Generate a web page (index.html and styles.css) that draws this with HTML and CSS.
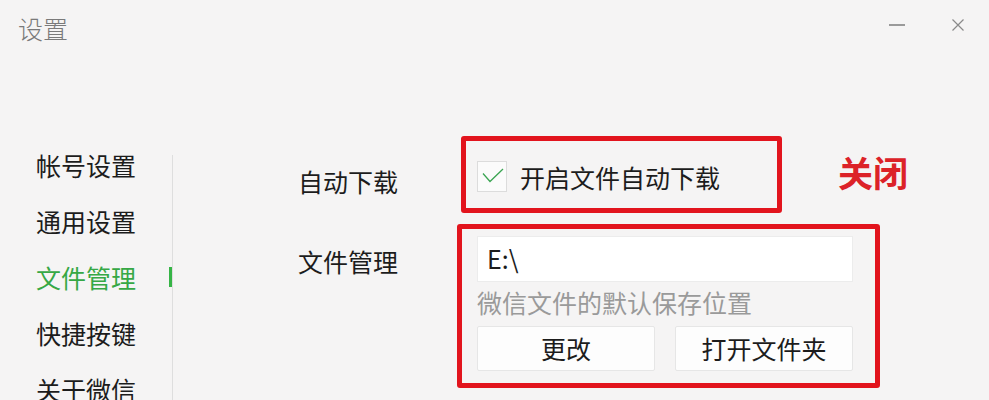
FILE: index.html
```html
<!DOCTYPE html>
<html lang="zh-CN">
<head>
<meta charset="utf-8">
<title>设置</title>
<link rel="stylesheet" href="styles.css">
</head>
<body>
<div class="window">
  <header class="titlebar">
    <div class="title">设置</div>
    <div class="controls">
      <svg class="ctl-min" width="16" height="14" viewBox="0 0 16 14"><line x1="0" y1="7" x2="16" y2="7" stroke="#9a9a9a" stroke-width="2"/></svg>
      <svg class="ctl-close" width="14" height="14" viewBox="0 0 14 14"><path d="M1.5 1.5 L12.5 12.5 M12.5 1.5 L1.5 12.5" stroke="#8a8a8a" stroke-width="1.2" fill="none"/></svg>
    </div>
  </header>
  <main class="main">
    <nav class="sidebar">
      <div class="nav-item">帐号设置</div>
      <div class="nav-item">通用设置</div>
      <div class="nav-item active">文件管理</div>
      <div class="nav-item">快捷按键</div>
      <div class="nav-item">关于微信</div>
    </nav>
    <section class="content">
      <div class="row row-download">
        <div class="label label-download">自动下载</div>
        <div class="mark-box box-download">
          <span class="checkbox">
            <svg width="30" height="31" viewBox="0 0 30 31"><path d="M6 12.5 L13 20.5 L26 8" stroke="#3aa552" stroke-width="1.3" fill="none"/></svg>
          </span>
          <span class="check-text">开启文件自动下载</span>
        </div>
        <div class="annot">关闭</div>
      </div>
      <div class="row row-files">
        <div class="label label-files">文件管理</div>
        <div class="mark-box box-files">
          <div class="path-input">E:\</div>
          <div class="hint">微信文件的默认保存位置</div>
          <div class="buttons">
            <div class="btn">更改</div>
            <div class="btn">打开文件夹</div>
          </div>
        </div>
      </div>
    </section>
  </main>
</div>
</body>
</html>
```
FILE: styles.css
```css
* { box-sizing: border-box; }
html, body {
  margin: 0;
  padding: 0;
  background: #f5f4f4;
  font-family: "Noto Sans CJK SC", "Noto Sans", sans-serif;
  color: #1c1c1c;
}
.window {
  width: 989px;
  height: 400px;
  overflow: hidden;
  background: #f5f4f4;
}
.titlebar {
  height: 136px;
  display: flex;
  justify-content: space-between;
  align-items: flex-start;
  padding: 16px 24px 0 18px;
}
.title {
  font-size: 25px;
  line-height: 25px;
  color: #7a7a7a;
  font-weight: 300;
}
.controls {
  display: flex;
  align-items: center;
  gap: 46px;
  padding-top: 2px;
}
.ctl-min, .ctl-close { display: block; }
.main {
  display: flex;
  align-items: flex-start;
}
.sidebar {
  width: 173px;
  margin-top: 19px;
  padding-left: 36px;
  border-right: 1px solid #dedede;
  display: flex;
  flex-direction: column;
  gap: 35px;
  height: 260px;
}
.nav-item {
  position: relative;
  font-size: 25px;
  line-height: 21px;
  white-space: nowrap;
}
.nav-item.active { color: #36a845; }
.nav-item.active::after {
  content: "";
  position: absolute;
  right: 0;
  top: 0;
  width: 3px;
  height: 20px;
  background: #36b446;
}
.content {
  padding-left: 125px;
  display: flex;
  flex-direction: column;
  gap: 11px;
}
.row {
  display: flex;
  align-items: flex-start;
}
.label {
  width: 100px;
  font-size: 25px;
  line-height: 21px;
  white-space: nowrap;
}
.label-download { margin-top: 35px; margin-right: 63px; }
.label-files { margin-top: 27px; margin-right: 59px; }
.mark-box {
  border: 5px solid #e2141d;
  border-radius: 3px;
}
.box-download {
  width: 321px;
  height: 77px;
  display: flex;
  align-items: flex-start;
  padding: 20px 10px 0 11px;
}
.checkbox {
  width: 30px;
  height: 31px;
  border: 1px solid #dcdcdc;
  background: #fbfbfb;
  flex: none;
  display: block;
}
.checkbox svg { display: block; margin: -1px; }
.check-text {
  margin-left: 13px;
  margin-top: 6px;
  font-size: 25px;
  line-height: 21px;
  white-space: nowrap;
}
.annot {
  margin-left: 56px;
  margin-top: 21px;
  font-size: 35px;
  line-height: 29px;
  font-weight: 700;
  color: #dc2228;
  white-space: nowrap;
}
.box-files {
  width: 423px;
  height: 164px;
  padding: 7px 22px 0 15px;
  display: flex;
  flex-direction: column;
}
.path-input {
  height: 46px;
  background: #ffffff;
  border: 1px solid #ececec;
  padding-left: 9px;
  font-size: 25px;
  line-height: 42px;
}
.hint {
  margin-top: 9px;
  font-size: 25px;
  line-height: 23px;
  color: #9a9a9a;
  white-space: nowrap;
}
.buttons {
  margin-top: 12px;
  display: flex;
  gap: 20px;
}
.btn {
  flex: 1;
  height: 45px;
  background: #fdfdfd;
  border: 1px solid #e6e6e6;
  border-radius: 2px;
  text-align: center;
  font-size: 25px;
  line-height: 43px;
  white-space: nowrap;
}
```
